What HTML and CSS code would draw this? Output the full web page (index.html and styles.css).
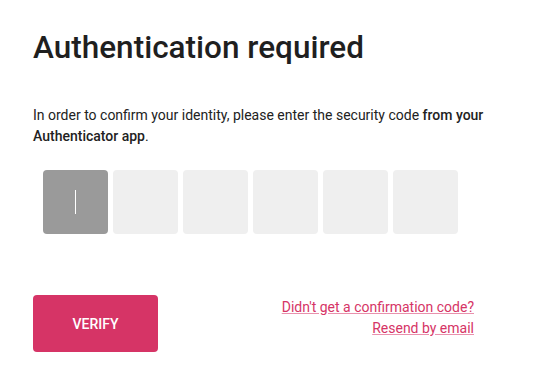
FILE: index.html
```html
<!DOCTYPE html>
<html lang="en">
<head>
<meta charset="utf-8">
<title>Authentication required</title>
<link rel="stylesheet" href="styles.css">
</head>
<body>
<main class="page">
  <h1 class="title">Authentication required</h1>
  <p class="intro">In order to confirm your identity, please enter the security code <strong>from your Authenticator app</strong>.</p>
  <div class="code">
    <div class="digit active"><span class="caret"></span></div>
    <div class="digit"></div>
    <div class="digit"></div>
    <div class="digit"></div>
    <div class="digit"></div>
    <div class="digit"></div>
  </div>
  <div class="actions">
    <button class="verify" type="button">VERIFY</button>
    <div class="links">
      <a href="#" class="link">Didn't get a confirmation code?</a>
      <a href="#" class="link">Resend by email</a>
    </div>
  </div>
</main>
</body>
</html>
```

FILE: styles.css
```css
html, body {
  margin: 0;
  padding: 0;
  background: #ffffff;
}
body {
  font-family: Roboto, "Liberation Sans", Arial, sans-serif;
  color: #222222;
}
.page {
  width: 460px;
  padding: 26px 0 0 33px;
}
.title {
  margin: 0;
  font-size: 31.5px;
  font-weight: 500;
  line-height: 44px;
  color: #1f1f1f;
}
.intro {
  margin: 35px 0 0;
  font-size: 14px;
  line-height: 21px;
  color: #222222;
}
.intro strong {
  font-weight: 500;
}
.code {
  display: flex;
  gap: 5px;
  margin: 23px 0 0 10px;
}
.digit {
  width: 65px;
  height: 64px;
  border-radius: 4px;
  background: #efefef;
  display: flex;
  align-items: center;
  justify-content: center;
}
.digit.active {
  background: #9a9a9a;
}
.caret {
  width: 1px;
  height: 24px;
  background: #ffffff;
}
.actions {
  display: flex;
  align-items: flex-start;
  margin-top: 61px;
  width: 441px;
  justify-content: space-between;
}
.verify {
  width: 125px;
  height: 57px;
  border: none;
  border-radius: 4px;
  background: #d63466;
  color: #ffffff;
  font-family: Roboto, "Liberation Sans", Arial, sans-serif;
  font-size: 14px;
  font-weight: 500;
  padding: 0;
}
.links {
  display: flex;
  flex-direction: column;
  align-items: flex-end;
  padding-top: 2px;
}
.link {
  font-size: 14px;
  line-height: 21px;
  color: #d63466;
  text-decoration: underline;
  text-decoration-color: #e991ad;
}
```
